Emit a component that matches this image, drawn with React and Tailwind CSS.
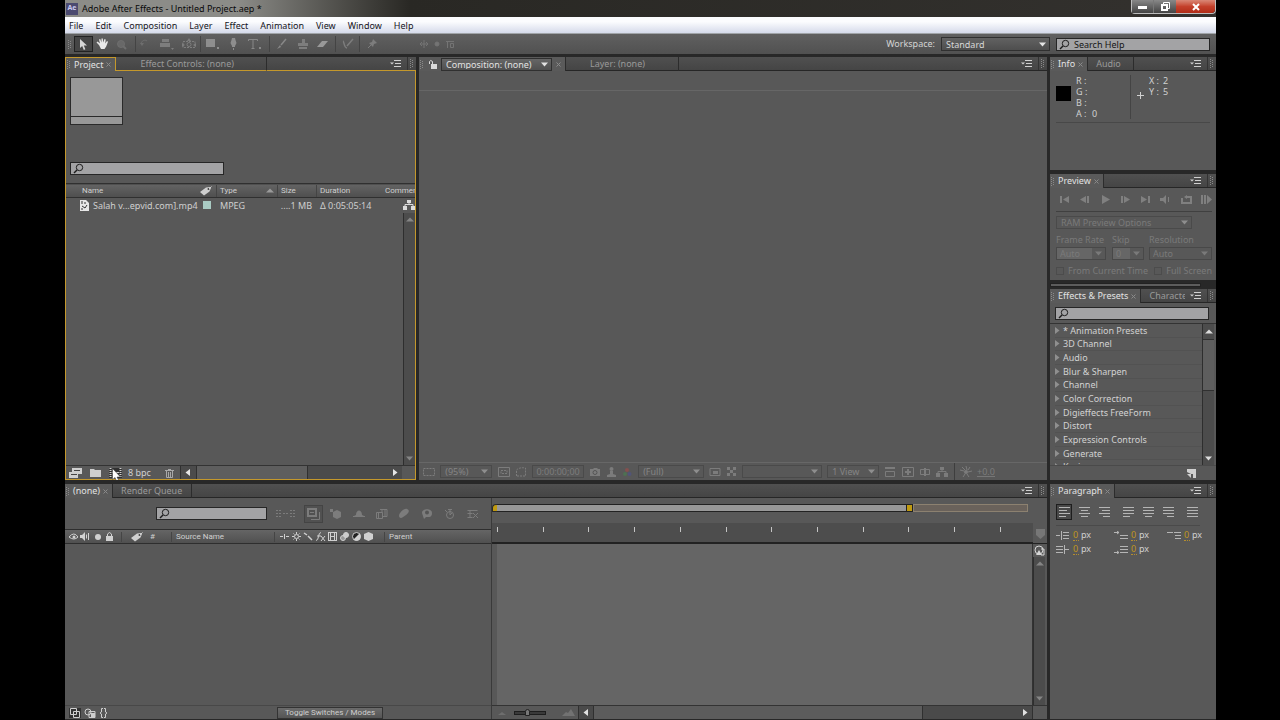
import clsx from "clsx";

const Svg = ({w = 12, h = 12, className, children}) => (
    <svg
        width={w}
        height={h}
        viewBox={`0 0 ${w} ${h}`}
        fill="none"
        stroke="currentColor"
        strokeWidth="1"
        aria-hidden="true"
        className={clsx("shrink-0", className)}
    >
        {children}
    </svg>
);

const solid = {fill: "currentColor", stroke: "none"};

const Down = ({className}) => (
    <Svg w={7} h={5} className={className}><path {...solid} d="M0 .5h7L3.500 4.500z"/></Svg>
);

const Up = ({className}) => (
    <Svg w={8} h={5} className={className}><path {...solid} d="M0 4.500h8L4 .5z"/></Svg>
);

const Left = ({className}) => (
    <Svg w={5} h={7} className={className}><path {...solid} d="M5 0v7L.5 3.500z"/></Svg>
);

const Right = ({className}) => (
    <Svg w={5} h={7} className={className}><path {...solid} d="M0 0v7l4.500-3.500z"/></Svg>
);

const Grip = () => (
    <Svg w={4} h={9} className="text-[#8a8a8a]">
        <path {...solid} d="M0 0h1v1H0zM0 2h1v1H0zM0 4h1v1H0zM0 6h1v1H0zM0 8h1v1H0zM2 1h1v1H2zM2 3h1v1H2zM2 5h1v1H2zM2 7h1v1H2z"/>
    </Svg>
);

const Magnifier = () => (
    <Svg w={11} h={11} className="text-[#1c1c1c]">
        <circle cx="6.500" cy="4.500" r="3.200"/>
        <path strokeWidth="1.500" d="M4 7 1 10"/>
    </Svg>
);

const TagIcon = () => (
    <Svg w={13} h={10}>
        <path {...solid} d="m1 6 6-4.500L11 1l1 1-1.500 3.500L5 9.500z"/>
        <circle cx="9.500" cy="3" r="1" fill="#444" stroke="none"/>
        <path d="M10 3 12.500.5"/>
    </Svg>
);

const FlowIcon = ({className}) => (
    <Svg w={12} h={10} className={className}>
        <path {...solid} d="M4 0h4v3H4zM0 6h4v4H0zM8 6h4v4H8z"/>
        <path d="M6 3v2M2 6.500v-2h8v2"/>
    </Svg>
);

const Search = ({label, placeholder, className}) => (
    <label className={clsx("flex h-[13px] items-center gap-1 border border-[#262626] bg-[#a3a3a5] pl-0.5", className)}>
        <Magnifier/>
        <input
            type="text"
            aria-label={label}
            placeholder={placeholder}
            className="h-full w-full min-w-0 bg-transparent text-[#151515] outline-none placeholder:text-[#151515]"
        />
    </label>
);

const Select = ({label, options, className, arrow = "text-[#8e8e8e]"}) => (
    <span className={clsx("relative flex h-[13px] items-center border", className)}>
        <select aria-label={label} className="h-full w-full appearance-none bg-transparent pl-1 leading-none outline-none">
            {options.map((option) => <option key={option}>{option}</option>)}
        </select>
        <Down className={clsx("pointer-events-none absolute right-[3px]", arrow)}/>
    </span>
);

const Close = () => (
    <button type="button" aria-label="Close tab" className="text-[#8a8a8a]">
        <Svg w={5} h={5}><path d="M.5.5l4 4M4.500.5l-4 4"/></Svg>
    </button>
);

const Tab = ({active, focused, children, className}) => (
    <div
        className={clsx(
            "flex shrink-0 items-center",
            active && "gap-[3px] bg-[#5a5a5a] pr-1 pl-px",
            !active && "border-r border-b border-r-[#2c2c2c] px-2",
            !active && (focused ? "border-b-[#c4982c]" : "border-b-[#262626]"),
            active && (focused ? "border-t border-r border-l border-t-[#c4982c] border-r-[#c4982c] border-l-[#c4982c]" : "border-r border-r-[#2c2c2c]"),
            className,
        )}
    >
        {active && <Grip/>}
        <button type="button" className={clsx("whitespace-nowrap", active ? "text-[#e2e2e2]" : "text-[#9a9a9a]")}>
            {children}
        </button>
        {active && <Close/>}
    </div>
);

const TabStrip = ({focused, children}) => (
    <div className="flex h-[14px] shrink-0 bg-linear-to-b from-[#505050] to-[#444444]">
        {children}
        <div className={clsx("flex min-w-0 flex-1 items-center justify-end border-b", focused ? "border-b-[#c4982c]" : "border-b-[#262626]")}>
            <button type="button" aria-label="Panel menu" className="mr-[6px] text-[#d0d0d0]">
                <Svg w={11} h={8}>
                    <path {...solid} d="M0 2.500h4L2 4.500z"/>
                    <path d="M4 .5h7M5 3.500h6M4 6.500h7"/>
                </Svg>
            </button>
            <span className="flex h-full w-[9px] items-center justify-center border-l border-[#333]"><Grip/></span>
        </div>
    </div>
);

const Panel = ({className, children}) => (
    <section className={clsx("flex min-h-0 min-w-0 flex-col overflow-hidden bg-[#585858]", className)}>{children}</section>
);

const VScroll = ({className, arrow = "text-[#858585]"}) => (
    <div className={clsx("flex w-[12px] flex-col items-center justify-between border-l border-[#2e2e2e] bg-[#4c4c4c] py-1", className)}>
        <Up className={arrow}/>
        <Down className={arrow}/>
    </div>
);

const TitleBar = () => (
    <header className="flex h-[17px] shrink-0 items-center justify-between bg-linear-to-r from-[#8c8c88] from-15% via-[#292824] via-30% to-[#33312e]">
        <div className="flex items-center gap-1 pl-px text-[#080808]">
            <span className="flex h-[12px] w-[12px] items-center justify-center bg-[#4b4a70] text-[7px] font-bold text-[#c9c8ee]">Ae</span>
            <h1>Adobe After Effects - Untitled Project.aep *</h1>
        </div>
        <div className="flex h-[14px] self-start rounded-b border border-t-0 border-[#bdbdbd] text-white">
            <button type="button" aria-label="Minimize" className="flex w-[22px] items-center justify-center border-r border-[#777] bg-linear-to-b from-[#888] to-[#444]">
                <Svg w={9} h={4}><path {...solid} d="M0 1h9v3H0z"/></Svg>
            </button>
            <button type="button" aria-label="Restore" className="flex w-[22px] items-center justify-center bg-linear-to-b from-[#888] to-[#444]">
                <Svg w={9} h={9}><path d="M2.500 2V.5h6v6H7"/><path strokeWidth="2" d="M1 3h5v5H1z"/></Svg>
            </button>
            <button type="button" aria-label="Close" className="flex w-[39px] items-center justify-center rounded-br bg-linear-to-b from-[#d98776] via-[#c4402b] to-[#b02c17]">
                <Svg w={8} h={8}><path strokeWidth="2" d="m1 1 6 6M7 1 1 7"/></Svg>
            </button>
        </div>
    </header>
);

const menus = ["File", "Edit", "Composition", "Layer", "Effect", "Animation", "View", "Window", "Help"];

const MenuBar = () => (
    <nav className="flex h-[17px] shrink-0 items-center gap-3 border-b border-[#a0a4a8] bg-linear-to-b from-[#fbfcfe] from-30% to-[#d5daea] pt-px pl-1 text-[#15151c]">
        {menus.map((menu) => <button type="button" key={menu}>{menu}</button>)}
    </nav>
);

const Tool = ({label, className, children}) => (
    <button type="button" aria-label={label} className={clsx("flex h-[16px] w-[19px] shrink-0 items-center justify-center", className)}>
        {children}
    </button>
);

const Toolbar = () => (
    <div className="flex h-[20px] shrink-0 items-center bg-linear-to-b from-[#606060] to-[#515151] pl-[3px] text-[#7d7d7d]">
        <Grip/>
        <Tool label="Selection" className="ml-[2px] border border-[#222] bg-[#454545] text-[#d5d5d5]">
            <Svg w={9} h={11}><path {...solid} d="M1 0v9l2.200-2 1.600 4 1.600-.7L4.800 6.500H8z"/></Svg>
        </Tool>
        <Tool label="Hand" className="text-[#e8e8e8]">
            <Svg w={13} h={12}>
                <path {...solid} d="M3 7 .5 4.500l1-1L4 5.500 3 1.500l1.200-.5L5.500 4.500V.5h1.300l.4 4L8.500 1l1.200.4-.5 4L11 3l1 .7-1.800 4.800L8.500 11H5z"/>
            </Svg>
        </Tool>
        <Tool label="Zoom" className="text-[#6e6e6e]"><Svg w={11} h={11}><circle cx="5" cy="5" r="3.500" fill="#686868"/><path strokeWidth="2" d="m7 7 3 3"/></Svg></Tool>
        <Tool label="Rotation" className="ml-1 border-l border-[#444] text-[#6e6e6e]"><Svg><path d="M2 6c0-3 4-5 6-3"/><path {...solid} d="M1 5h4L3 8z"/></Svg></Tool>
        <Tool label="Unified camera" className="w-[24px]">
            <Svg w={15}><path {...solid} d="M3 1h7v3H3zM1 5h10v4H1zM12 10h3l-1.500 2z"/></Svg>
        </Tool>
        <Tool label="Pan behind" className="w-[22px]">
            <Svg w={14}><path d="M1 3.500h12v6H1z" strokeDasharray="2 1"/><circle cx="7" cy="6.500" r="2"/><path {...solid} d="m5 3 2-3 2 3zM0 5v4l3-2zM14 5v4l-3-2z"/></Svg>
        </Tool>
        <Tool label="Rectangle" className="w-[24px] border-l border-[#444] text-[#8e8e8e]"><Svg w={13} h={10}><path {...solid} d="M0 0h9v8H0zM11 8h2v2h-2z"/></Svg></Tool>
        <Tool label="Pen" className="text-[#8e8e8e]"><Svg w={9}><path {...solid} d="M3 0h3l.5 2 1 3L6 8v1H3V8L1.500 5l1-3zM4 10h1v2H4z"/></Svg></Tool>
        <Tool label="Type" className="w-[22px] text-[#888]"><Svg w={13}><path d="M.5 3V1.500h9V3M5 1.500v9M3.500 10.500h3"/><path {...solid} d="M11 9h2v2h-2z"/></Svg></Tool>
        <Tool label="Brush" className="ml-1 w-[24px] border-l border-[#444] text-[#888]"><Svg><path strokeWidth="1.500" d="M10 1 5 7"/><path {...solid} d="M4 7 1 11l4-2z"/></Svg></Tool>
        <Tool label="Clone stamp"><Svg><path {...solid} d="M5 1h3v4h3v3H1V5h4zM2 9h8v2H2z"/></Svg></Tool>
        <Tool label="Eraser" className="text-[#999]"><Svg><path {...solid} d="M6 3h6L7 9H1z"/></Svg></Tool>
        <Tool label="Roto brush" className="ml-1 w-[24px] border-l border-[#444]"><Svg><path strokeWidth="1.500" d="M11 1 5 8M1 3c1 0 1 7 4 7"/></Svg></Tool>
        <Tool label="Puppet pin" className="w-[24px] border-l border-[#444]"><Svg><path {...solid} d="m7 1 4 4-3 1-1 3-4-4 3-1z"/><path d="M5 7 2 10"/></Svg></Tool>
        <div className="ml-9 flex items-center gap-[5px] text-[#747474]">
            <Svg w={10} h={8}><path d="M5 0v8M1 4h8M3 2 1 4l2 2M7 2l2 2-2 2"/></Svg>
            <Svg w={6} h={6}><circle cx="3" cy="3" r="2" fill="currentColor"/></Svg>
            <Svg w={10} h={8}><path d="M1 1.500h8M2.500 2v6M5.500 3.500h3v4h-3z"/></Svg>
        </div>
        <label htmlFor="workspace" className="ml-auto text-[#d4d4d4]">Workspace:</label>
        <span className="relative ml-[6px] flex h-[14px] w-[109px] items-center border border-[#303030] bg-linear-to-b from-[#626262] to-[#4e4e4e] text-[#d8d8d8]">
            <select id="workspace" className="h-full w-full appearance-none bg-transparent pl-1 leading-none outline-none"><option>Standard</option></select>
            <Down className="pointer-events-none absolute right-[3px] text-[#e5e5e5]"/>
        </span>
        <Search label="Search Help" placeholder="Search Help" className="mr-[6px] ml-[6px] w-[154px]"/>
    </div>
);

const Project = () => (
    <Panel>
        <TabStrip focused>
            <Tab active focused>Project</Tab>
            <Tab focused className="w-[151px] pl-6">Effect Controls: (none)</Tab>
        </TabStrip>
        <div className="flex min-h-0 flex-1 flex-col border-r border-b border-l border-r-[#c4982c] border-b-[#c4982c] border-l-[#c4982c]">
            <div className="flex h-[112px] shrink-0 flex-col justify-between px-1 pt-[6px] pb-2">
                <div className="flex h-[48px] w-[53px] flex-col border border-[#2a2a2a] bg-[#989898]">
                    <span className="mt-auto h-[8px] border-t border-[#2a2a2a]"/>
                </div>
                <Search label="Search project" className="w-[154px]"/>
            </div>
            <table className="w-full table-fixed border-collapse text-left whitespace-nowrap text-[#cfcfcf]">
                <colgroup>
                    <col className="w-[133px]"/>
                    <col className="w-[17px]"/>
                    <col className="w-[61px]"/>
                    <col className="w-[39px]"/>
                    <col className="w-[65px]"/>
                    <col/>
                </colgroup>
                <thead>
                    <tr className="h-[14px] border-y border-[#303030] bg-linear-to-b from-[#636363] to-[#4f4f4f] font-['Roboto',sans-serif] text-[8px]">
                        <th className="pl-4 font-normal">Name</th>
                        <th><TagIcon/></th>
                        <th className="font-normal">
                            <span className="flex items-center justify-between border-l border-[#444] px-[3px]">Type<Up className="text-[#9a9a9a]"/></span>
                        </th>
                        <th className="font-normal"><span className="block border-l border-[#444] pl-[3px]">Size</span></th>
                        <th className="font-normal"><span className="block border-l border-[#444] pl-[3px]">Duration</span></th>
                        <th className="overflow-hidden pl-1 font-normal">Comment</th>
                    </tr>
                </thead>
                <tbody>
                    <tr className="h-[15px]">
                        <td className="pl-[13px]">
                            <span className="flex items-center gap-1">
                                <Svg w={10} h={11} className="text-[#e6e6e6]">
                                    <path {...solid} d="M1 0h6l3 3v8H1z"/>
                                    <path stroke="#333" d="M3 1v3M3 6l3 2 2-3M2 9h2M6 2v2"/>
                                </Svg>
                                Salah v...epvid.com].mp4
                            </span>
                        </td>
                        <td className="pl-1"><span className="block h-[8px] w-[8px] bg-[#a9cbc3]"/></td>
                        <td className="pl-1">MPEG</td>
                        <td className="pr-1 text-right">....1 MB</td>
                        <td className="pl-1">Δ 0:05:05:14</td>
                        <td><FlowIcon className="ml-auto text-[#dcdcdc]"/></td>
                    </tr>
                </tbody>
            </table>
            <div className="flex min-h-0 flex-1 justify-end"><VScroll/></div>
            <div className="flex h-[14px] shrink-0 items-center border-t border-[#333] pl-[3px] text-[#cfcfcf]">
                <button type="button" aria-label="Interpret footage">
                    <Svg w={14} h={10}><path {...solid} d="M3 0h10v6H3z"/><path {...solid} d="M0 4h9v6H0z"/><path stroke="#444" d="M2 6.500h6M5 2.500h6"/></Svg>
                </button>
                <button type="button" aria-label="New folder" className="ml-[7px]">
                    <Svg w={11} h={9}><path {...solid} d="M0 1h4l1 1h6v7H0z"/></Svg>
                </button>
                <span className="relative ml-2 flex">
                    <button type="button" aria-label="New composition" className="bg-[#303030]">
                        <Svg w={13} h={10}><path d="M1.500 0v10M11.500 0v10" strokeDasharray="1 1" strokeWidth="2"/><path d="M3 4.500h7"/></Svg>
                    </button>
                    <Svg w={10} h={15} className="absolute top-0 left-[3px] z-10">
                        <path d="M.5.5v11L3 9.500l2 4.500 2-1-2-4h3.500z" fill="#fff" stroke="#333" strokeWidth=".5"/>
                    </Svg>
                </span>
                <button type="button" className="ml-[6px]">8 bpc</button>
                <button type="button" aria-label="Delete" className="ml-[14px] text-[#a8a8a8]">
                    <Svg w={9} h={10}><path d="M0 2.500h9M3 1.500h3M1.500 3v6.500h6V3M3.500 4v5M5.500 4v5"/></Svg>
                </button>
                <div className="ml-[6px] flex h-full flex-1 items-center border-l border-[#303030] bg-[#4b4b4b] pl-1 text-[#e6e6e6]">
                    <Left/>
                    <span className="ml-[6px] h-full w-[112px] border-x border-[#303030] bg-[#5e5e5e]"/>
                    <Right className="mr-1 ml-auto"/>
                </div>
                <span className="w-[13px]"/>
            </div>
        </div>
    </Panel>
);

const dimSelect = "border-[#4a4a4a] text-[#858585]";

const Composition = () => (
    <Panel>
        <TabStrip>
            <div className="flex shrink-0 items-center gap-1 border-r border-[#2c2c2c] bg-[#5a5a5a] pr-1 pl-px">
                <Grip/>
                <Svg w={9} h={10} className="text-[#dadada]"><path d="M1.500 5V2.500q1-2 3 0V5"/><path {...solid} d="M3 5h6v5H3z"/></Svg>
                <Select
                    label="Composition"
                    options={["Composition: (none)"]}
                    className="w-[111px] border-[#303030] bg-linear-to-b from-[#666] to-[#505050] text-[#e2e2e2]"
                    arrow="text-[#e2e2e2]"
                />
                <Close/>
            </div>
            <Tab className="w-[113px] pl-6">Layer: (none)</Tab>
        </TabStrip>
        <div className="h-[20px] shrink-0 border-b border-[#666]"/>
        <div className="flex-1"/>
        <div className="flex h-[18px] shrink-0 items-center justify-between border-t border-[#676767] pr-[52px] pl-1 text-[#7c7c7c]">
            <Svg><path d="M.5 2.500h11v7H.5z" strokeDasharray="2 1"/></Svg>
            <Select label="Magnification" options={["(95%)"]} className={clsx("w-[52px]", dimSelect)}/>
            <Svg><path d="M.5 1.500h11v9H.5z"/><path d="M3 4.500h6v3H3z" strokeDasharray="2 1"/></Svg>
            <Svg><path d="M1.500 10V4q3-3 9-2v8z" strokeDasharray="2 1"/></Svg>
            <button type="button" className="h-[13px] w-[52px] border border-[#4a4a4a] leading-none">0:00:00;00</button>
            <Svg><path {...solid} d="M1 3h3l1-1h3l1 1h2v7H1z"/><circle cx="6" cy="6.500" r="2" stroke="#555"/></Svg>
            <Svg w={9}><circle cx="4.500" cy="3" r="2" {...solid}/><path {...solid} d="M3 5h3v3l3 1v2H0V9l3-1z"/></Svg>
            <Svg><circle cx="6" cy="4" r="2" fill="#84504f" stroke="none"/><circle cx="4" cy="8" r="2" fill="#4e7052" stroke="none"/><circle cx="8.500" cy="8" r="2" fill="#515478" stroke="none"/></Svg>
            <Select label="Resolution" options={["(Full)"]} className={clsx("w-[66px]", dimSelect)}/>
            <Svg><path d="M1 2.500h10v7H1z"/><path {...solid} d="M4 5h5v3H4z"/></Svg>
            <Svg w={10} h={10}><path {...solid} d="M0 0h3v3H0zM6 0h3v3H6zM3 3h3v3H3zM0 6h3v3H0zM6 6h3v3H6z"/></Svg>
            <Select label="Camera" options={[""]} className={clsx("w-[80px]", dimSelect)}/>
            <Select label="View layout" options={["1 View"]} className={clsx("w-[52px]", dimSelect)}/>
            <Svg><path strokeWidth="2" d="M1 2h10"/><path d="M1.500 5.500h9v5h-9z"/></Svg>
            <Svg><path d="M.5 1.500h11v9H.5z"/><path {...solid} d="M5 3h2v2h2v2H7v2H5V7H3V5h2z"/></Svg>
            <Svg><path d="M1.500 3.500h9v5h-9z"/><path strokeWidth="2" d="M6 2v8"/></Svg>
            <FlowIcon/>
            <span className="h-full border-l border-[#3e3e3e]"/>
            <Svg><circle cx="6" cy="6" r="2" {...solid}/><path d="m6 0 1 4M12 5 8 6M9 11 7 8M3 11l2-3M0 4l4 1M2 1l3 3M10 1 8 4"/></Svg>
            <button type="button" className="border-b border-[#777] leading-none">+0.0</button>
        </div>
    </Panel>
);

const Info = () => (
    <Panel className="h-[113px] shrink-0">
        <TabStrip>
            <Tab active>Info</Tab>
            <Tab className="w-[46px]">Audio</Tab>
        </TabStrip>
        <div className="mx-[6px] flex border-b border-[#484848] pt-1 pb-[3px] text-[#d0d0d0]">
            <span className="mt-[11px] h-[15px] w-[15px] bg-black"/>
            <dl className="ml-[5px] grid w-[55px] grid-cols-[16px_1fr] content-start border-r border-[#444] leading-[11px]">
                <dt>R :</dt><dd/>
                <dt>G :</dt><dd/>
                <dt>B :</dt><dd/>
                <dt>A :</dt><dd>0</dd>
            </dl>
            <Svg w={7} h={7} className="mt-[17px] ml-[6px]"><path d="M3.500 0v7M0 3.500h7"/></Svg>
            <dl className="ml-[5px] grid grid-cols-[14px_1fr] content-start leading-[11px]">
                <dt>X :</dt><dd>2</dd>
                <dt>Y :</dt><dd>5</dd>
            </dl>
        </div>
    </Panel>
);

const transport = [
    ["First frame", "M1 1h2v7H1zM10 1v7L4 4.500z"],
    ["Previous frame", "M7 1v7L1 4.500zM8 1h2v7H8z"],
    ["Play", "M2 0v9l8-4.500z"],
    ["Next frame", "M1 1h2v7H1zM4 1v7l6-3.500z"],
    ["Last frame", "M1 1v7l6-3.500zM8 1h2v7H8z"],
    ["Audio", "M0 3h3l3-3v9L3 6H0zM8 2h1v5H8z"],
    ["Loop", "M0 3h2v4h7V3H6v1L3 2l3-2v1h5v8H0z"],
    ["RAM preview", "M0 0h2v9H0zM3 0h2v9H3zM6 0v9l5-4.500z"],
];

const Preview = () => (
    <Panel className="h-[106px] shrink-0">
        <TabStrip><Tab active>Preview</Tab></TabStrip>
        <div className="flex flex-1 flex-col pr-1 pl-[6px] text-[#7a7a7a]">
            <div className="flex h-[24px] shrink-0 items-center justify-between border-b border-[#404040] pl-[3px] text-[#808080]">
                {transport.map(([label, d]) => (
                    <button type="button" key={label} aria-label={label}><Svg w={11} h={9}><path {...solid} d={d}/></Svg></button>
                ))}
            </div>
            <Select label="Preview options" options={["RAM Preview Options"]} className="mt-1 w-[136px] border-[#4a4a4a]"/>
            <div className="mt-1 grid grid-cols-[56px_37px_1fr] leading-[14px]">
                <label htmlFor="rate">Frame Rate</label>
                <label htmlFor="skip">Skip</label>
                <label htmlFor="resolution">Resolution</label>
                {[["rate", "Auto", "w-[50px]"], ["skip", "0", "w-[32px]"], ["resolution", "Auto", "w-full"]].map(([id, value, width]) => (
                    <span key={id} className={clsx("relative flex h-[13px] items-center border border-[#484848]", width)}>
                        <select id={id} className={clsx("h-full w-full appearance-none pl-[3px] leading-none", id === "resolution" ? "bg-[#585858]" : "bg-[#666]")}>
                            <option>{value}</option>
                        </select>
                        <span className="pointer-events-none absolute right-0 flex h-full w-[13px] items-center justify-center bg-[#585858]"><Down/></span>
                    </span>
                ))}
            </div>
            <div className="mt-1 flex justify-between leading-[13px]">
                <label className="flex items-center gap-1"><input type="checkbox" className="h-[8px] w-[8px] appearance-none border border-[#4c4c4c]"/>From Current Time</label>
                <label className="flex items-center gap-1 whitespace-nowrap"><input type="checkbox" className="h-[8px] w-[8px] appearance-none border border-[#4c4c4c]"/>Full Screen</label>
            </div>
        </div>
    </Panel>
);

const effects = [
    "* Animation Presets", "3D Channel", "Audio", "Blur & Sharpen", "Channel", "Color Correction",
    "Digieffects FreeForm", "Distort", "Expression Controls", "Generate", "Keying",
];

const Effects = () => (
    <Panel className="flex-1">
        <TabStrip>
            <Tab active>Effects & Presets</Tab>
            <div className="w-[44px] shrink-0 overflow-hidden border-b border-[#262626] pl-2">
                <button type="button" className="text-[#9a9a9a]">Character</button>
            </div>
        </TabStrip>
        <Search label="Search effects" className="mt-1 mr-[7px] mb-[3px] ml-[5px] shrink-0"/>
        <div className="flex min-h-0 flex-1 overflow-hidden border-t border-[#333]">
            <ul className="grid h-[150px] flex-1 grid-rows-11 pl-[5px] text-[#d2d2d2]">
                {effects.map((name) => (
                    <li key={name} className="flex items-center gap-[3px] border-b border-[#525252] leading-none">
                        <Right className="text-[#8f8f8f]"/>{name}
                    </li>
                ))}
            </ul>
            <div className="mr-[2px] flex w-[12px] flex-col items-center border-l border-[#2e2e2e] bg-[#4c4c4c] text-[#dcdcdc]">
                <Up className="my-[5px]"/>
                <span className="h-[52px] w-full border-y border-[#303030] bg-[#5e5e5e]"/>
                <Down className="mt-auto mb-1"/>
            </div>
        </div>
        <div className="flex h-[15px] shrink-0 items-center justify-end border-t border-[#4a4a4a] pr-5">
            <button type="button" aria-label="New preset" className="text-[#d0d0d0]">
                <Svg w={9} h={9}><path {...solid} d="M0 0h9v9H6V5H4L0 3z"/><path {...solid} d="M0 5h4v4z"/></Svg>
            </button>
        </div>
    </Panel>
);

const layerSwitches = [
    <path key="a" d="M1 4.500h3M7 4.500h3M5.500 2v5"/>,
    <g key="b"><circle cx="5.500" cy="4.500" r="2"/><path d="M5.500 0v2M5.500 7v2M1 4.500h2M8 4.500h2M2.500 1.500l1 1M7.500 6.500l1 1M8.500 1.500l-1 1M3.500 6.500l-1 1"/></g>,
    <path key="c" strokeWidth="1.500" d="m1 1 3 2M5 4l4 4"/>,
    <path key="d" d="M1 8.500q2 0 2.500-4T6 .5M2 4h4M6 4l4 5M10 4 6 9"/>,
    <path key="e" d="M1.500 0v9M3.500 0v9M7.500 0v9M9.500 0v9M1 .5h9M3 4.500h5M1 8.500h9"/>,
    <g key="f"><circle cx="4" cy="6" r="2.500" fill="#999"/><circle cx="7" cy="3" r="2.500" fill="#ccc"/></g>,
    <g key="g"><circle cx="5.500" cy="4.500" r="4" fill="#222"/><path {...solid} d="M2.500 7.500a4 4 0 0 0 6-6z"/></g>,
    <path key="h" {...solid} d="m5.500 0 4.500 2v5L5.500 9 1 7V2z"/>,
];

const timelineTools = [
    ["Draft 3D", <path key="a" {...solid} d="M0 1h3v3H0zM7 2l4 2v5l-4 2-4-2V4z"/>],
    ["Shy layers", <path key="b" {...solid} d="M0 8h12v1H0zM3 7c0-6 6-6 6 0l2 1H1z"/>],
    ["Frame blending", <path key="c" d="M.5 4.500h6v6h-6zM4 1.500h7v7H7M2.500 5v5M6 2v3M9 2v6"/>],
    ["Motion blur", <path key="d" {...solid} d="M1 8c0-3 5-8 8-7s2 4-1 6-6 5-7 1z"/>],
    ["Brainstorm", <g key="e"><path {...solid} d="M1 5C1 0 11 0 11 5s-4 4-6 4l-2 2z"/><circle cx="6" cy="4.500" r="2" fill="#555" stroke="none"/></g>],
    ["Auto-keyframe", <g key="f"><circle cx="6" cy="7" r="3.500"/><path d="M4 1.500h4M6 2v5l2-2M1 2l2 2"/></g>],
    ["Graph editor", <path key="g" d="M.5 2.500h10M.5 5.500h5M.5 9.500h5M3 2v8M6 10l5-5M6 5l5 5"/>],
];

const ticks = Array.from({length: 12}, (_, i) => i);

const Timeline = () => (
    <Panel>
        <TabStrip>
            <Tab active>(none)</Tab>
            <Tab className="w-[79px]">Render Queue</Tab>
        </TabStrip>
        <div className="flex min-h-0 flex-1">
            <div className="flex w-[427px] shrink-0 flex-col border-r border-[#3a3a3a]">
                <div className="flex h-[31px] shrink-0 items-center pr-3 pl-[91px] text-[#7c7c7c]">
                    <Search label="Search timeline" className="mr-[9px] w-[111px]"/>
                    <Svg w={19} h={9}><path d="M0 1.500h5M0 4.500h5M0 7.500h5M7 4.500h5M14 1.500h5M14 4.500h5M14 7.500h5" strokeDasharray="2 1"/></Svg>
                    <button type="button" aria-label="Live update" className="mr-[7px] ml-[9px] border border-[#444] bg-[#515151] p-[2px]">
                        <Svg w={13} h={12}><path strokeWidth="2" d="M1 1h8v7H1z"/><path d="M4 11.500h8.500V4M3 4.500h4"/></Svg>
                    </button>
                    <div className="flex flex-1 justify-between">
                        {timelineTools.map(([label, shape]) => (
                            <button type="button" key={label} aria-label={label}><Svg>{shape}</Svg></button>
                        ))}
                    </div>
                </div>
                <div className="flex h-[15px] shrink-0 items-center border-y border-[#2e2e2e] bg-linear-to-b from-[#656565] to-[#505050] pl-1 font-['Roboto',sans-serif] text-[8px] text-[#d0d0d0]">
                    <Svg w={10} h={9}><path d="M0 5q5-6 9 0-4 4-9 0z"/><circle cx="5" cy="5" r="1.500" {...solid}/></Svg>
                    <Svg w={11} h={9}><path {...solid} d="M1 3h2l3-3v9L3 6H1z"/><path d="M7.500 2.500v4M9.500 1v7"/></Svg>
                    <Svg w={8} h={8} className="ml-1"><circle cx="4" cy="4" r="3" {...solid}/></Svg>
                    <Svg w={7} h={9} className="ml-1"><path d="M1.500 4V2q2-3 4 0v2"/><path {...solid} d="M0 4h7v5H0z"/></Svg>
                    <span className="mx-[8px] h-[10px] border-l border-[#454545]"/>
                    <TagIcon/>
                    <span className="ml-[7px]">#</span>
                    <span className="mr-1 ml-4 h-[10px] border-l border-[#454545]"/>
                    <span>Source Name</span>
                    <span className="ml-auto h-[10px] border-l border-[#454545]"/>
                    <div className="ml-1 flex gap-px">
                        {layerSwitches.map((shape) => <Svg key={shape.key} w={11} h={9}>{shape}</Svg>)}
                    </div>
                    <span className="ml-[10px] h-[10px] border-l border-[#454545]"/>
                    <span className="ml-1 w-[102px]">Parent</span>
                </div>
                <div className="flex-1"/>
                <div className="flex h-[14px] shrink-0 items-center border-t border-[#484848] pl-1 text-[#cfcfcf]">
                    <Svg w={12} h={10} className="bg-[#333]"><path d="M1.500.5h6v6h-6zM4.500 3.500h6v6h-6z"/></Svg>
                    <Svg w={12} h={10} className="ml-[3px]"><circle cx="4" cy="4" r="3"/><path d="M5 3.500h6v6H5z"/><path {...solid} d="M7 5h4v4H7z"/></Svg>
                    <Svg w={9} h={10} className="ml-[3px]"><path d="M4 .5H2.500V4L1 5l1.500 1v3.500H4M5 .5h1.500V4L8 5 6.500 6v3.500H5"/></Svg>
                    <button type="button" className="mr-[108px] ml-auto h-[12px] w-[106px] border border-[#333] bg-linear-to-b from-[#6b6b6b] to-[#555] font-['Roboto',sans-serif] text-[8px] leading-none">
                        Toggle Switches / Modes
                    </button>
                </div>
            </div>
            <div className="flex min-w-0 flex-1 flex-col">
                <div className="flex h-[46px] shrink-0 border-b border-[#222]">
                    <div className="flex min-w-0 flex-1 flex-col">
                        <div className="mt-[6px] mr-[5px] flex h-[8px]">
                            <span className="w-[5px] rounded-tl border border-r-0 border-[#2a2a2a] bg-[#c09a10]"/>
                            <span className="flex-[412] border-y border-[#222] bg-[#989898]"/>
                            <span className="w-[7px] border border-[#222] bg-[#c09a10]"/>
                            <span className="flex-[114] border border-[#8c8170] bg-[#6a625b]"/>
                        </div>
                        <div className="mt-[11px] flex flex-1 items-start justify-between border-b border-[#222] bg-[#4d4d4d] pt-1 pr-[32px] pl-[5px]">
                            {ticks.map((tick) => <span key={tick} className="h-[5px] w-px bg-[#c4c4c4]"/>)}
                        </div>
                    </div>
                    <div className="flex w-[14px] items-end justify-center pb-1">
                        <Svg w={9} h={10} className="text-[#777]"><path {...solid} d="M0 0h9v6L4.500 10 0 6z"/></Svg>
                    </div>
                </div>
                <div className="flex min-h-0 flex-1">
                    <div className="ml-[5px] flex-1 border-r border-[#333] bg-[#656565]"/>
                    <div className="mr-[2px] flex w-[12px] flex-col items-center">
                        <Svg w={11} h={13} className="text-[#d5d5d5]"><circle cx="5" cy="6" r="4"/><path {...solid} d="M2 11l3-5 3 5z"/><path d="M7 5h3v6H7"/></Svg>
                        <VScroll className="flex-1"/>
                    </div>
                </div>
                <div className="flex h-[14px] shrink-0 items-center border-t border-[#333] pr-[14px]">
                    <Svg w={8} h={5} className="ml-[6px] text-[#6e6e6e]"><path {...solid} d="M0 5l4-3 4 3z"/></Svg>
                    <input
                        type="range"
                        aria-label="Time zoom"
                        defaultValue="40"
                        className="ml-2 h-[4px] w-[32px] appearance-none border border-[#1e1e1e] bg-[#3a3a3a] [&::-webkit-slider-thumb]:h-[7px] [&::-webkit-slider-thumb]:w-[5px] [&::-webkit-slider-thumb]:appearance-none [&::-webkit-slider-thumb]:rounded-t [&::-webkit-slider-thumb]:border [&::-webkit-slider-thumb]:border-[#222] [&::-webkit-slider-thumb]:bg-[#777]"
                    />
                    <Svg w={13} h={7} className="ml-4 text-[#727272]"><path {...solid} d="M0 7l4-4 2 1 3-4 4 7z"/></Svg>
                    <div className="ml-[3px] flex h-full flex-1 items-center border-x border-[#303030] bg-[#4a4a4a] pl-1 text-[#e2e2e2]">
                        <Left/>
                        <span className="ml-[5px] h-full flex-[326] border-x border-[#303030] bg-[#5c5c5c]"/>
                        <span className="flex-[100]"/>
                        <Right className="mr-1"/>
                    </div>
                </div>
            </div>
        </div>
    </Panel>
);

const alignments = [
    ["Left align", "M0 .5h11M0 3.500h8M0 6.500h11M0 9.500h7"],
    ["Center", "M0 .5h11M2 3.500h7M0 6.500h11M2 9.500h7"],
    ["Right align", "M0 .5h11M3 3.500h8M0 6.500h11M4 9.500h7"],
    ["Justify last left", "M0 .5h11M0 3.500h11M0 6.500h11M0 9.500h7"],
    ["Justify last centered", "M0 .5h11M0 3.500h11M0 6.500h11M2 9.500h7"],
    ["Justify last right", "M0 .5h11M0 3.500h11M0 6.500h11M4 9.500h7"],
    ["Justify all", "M0 .5h11M0 3.500h11M0 6.500h11M0 9.500h11"],
];

const indents = [
    ["Indent left", "M0 4.500h4M5.500 0v9M7 1.500h6M7 4.500h6M7 7.500h6"],
    ["Space before", "M0 1.500h5M3 0l2 1.500L3 3M6 4.500h8M6 7.500h8"],
    ["Indent first line", "M0 1.500h6M7 1.500h7M8 4.500h6M8 7.500h6"],
    ["Indent right", "M0 1.500h7M0 4.500h7M0 7.500h7M8.500 0v9M9 4.500h4"],
    ["Space after", "M6 1.500h8M6 4.500h8M0 7.500h5M3 6l2 1.500L3 9M6 7.500h8"],
];

const Paragraph = () => (
    <Panel>
        <TabStrip><Tab active>Paragraph</Tab></TabStrip>
        <div className="mr-[16px] ml-[6px] flex h-[28px] shrink-0 items-center justify-between border-b border-[#4a4a4a] text-[#b5b5b5]">
            {alignments.map(([label, d], i) => (
                <button
                    type="button"
                    key={label}
                    aria-label={label}
                    className={clsx("flex h-[16px] w-[16px] items-center justify-center", i === 0 && "border border-[#1e1e1e] bg-[#484848]", i === 2 && "mr-1", i === 6 && "ml-1")}
                >
                    <Svg w={11} h={10}><path d={d}/></Svg>
                </button>
            ))}
        </div>
        <div className="mt-[2px] grid grid-cols-[58px_53px_1fr] pl-[6px] text-[#d0d0d0]">
            {indents.map(([label, d]) => (
                <label key={label} className="flex h-[14px] items-center">
                    <Svg w={14} h={9} className="mr-[3px] text-[#b5b5b5]"><path d={d}/></Svg>
                    <input type="text" aria-label={label} defaultValue="0" className="mr-[2px] h-[11px] w-[6px] border-b border-dotted border-[#b48d2e] bg-transparent text-[#c09620] outline-none"/>
                    px
                </label>
            ))}
        </div>
    </Panel>
);

export default function App() {
    return (
        <div className="h-screen bg-black pr-16 pl-[65px] font-['Noto_Sans','Open_Sans',sans-serif] text-[9px]">
            <div className="flex h-full flex-col bg-[#282828] pb-px">
                <TitleBar/>
                <MenuBar/>
                <Toolbar/>
                <main className="mt-[3px] grid min-h-0 flex-1 grid-cols-[351px_minmax(0,1fr)_166px] grid-rows-[minmax(0,423fr)_minmax(0,235fr)] gap-x-[3px] gap-y-1">
                    <Project/>
                    <Composition/>
                    <div className="flex min-h-0 flex-col">
                        <Info/>
                        <div className="h-1 shrink-0"/>
                        <Preview/>
                        <div className="mt-[3px] mr-[15px] mb-[2px] h-[4px] shrink-0 border border-[#222] bg-[#5c5c5c]"/>
                        <Effects/>
                    </div>
                    <div className="col-span-2 grid min-h-0"><Timeline/></div>
                    <Paragraph/>
                </main>
            </div>
        </div>
    );
}
